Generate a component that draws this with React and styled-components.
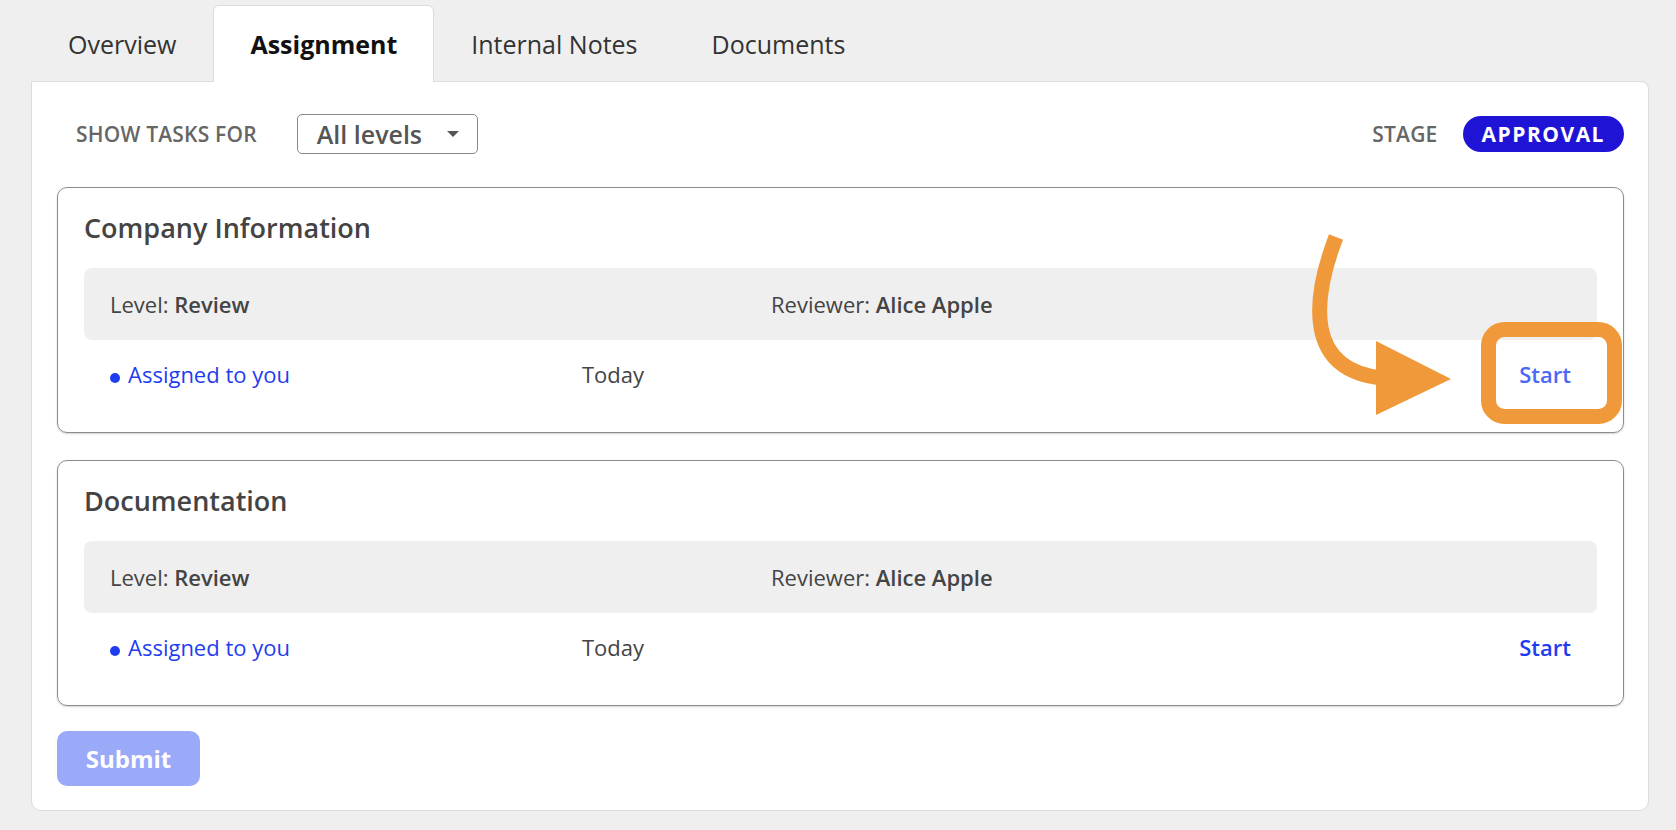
import React from "react";
import styled, { createGlobalStyle } from "styled-components";

const GlobalStyle = createGlobalStyle`
  html, body { margin: 0; padding: 0; }
  body {
    background: #efefef;
    font-family: "Open Sans", "Noto Sans", sans-serif;
    color: #444;
  }
  * { box-sizing: border-box; }
`;

const Page = styled.div`
  position: relative;
  width: 1676px;
  height: 830px;
  padding: 5px 27px 0 31px;
`;

const TabBar = styled.div`
  display: flex;
  position: relative;
  z-index: 1;
  margin-bottom: -1px;
`;

const Tab = styled.div`
  height: 77px;
  padding: 0 36px;
  display: flex;
  align-items: center;
  font-size: 25px;
  border: 1px solid ${(p) => (p.$active ? "#dcdcdc" : "transparent")};
  border-bottom: none;
  border-radius: 6px 6px 0 0;
  background: ${(p) => (p.$active ? "#fff" : "transparent")};
  color: ${(p) => (p.$active ? "#111" : "#333")};
  font-weight: ${(p) => (p.$active ? 700 : 400)};
`;

const Panel = styled.div`
  background: #fff;
  border: 1px solid #dcdcdc;
  border-radius: 0 8px 10px 10px;
  padding: 32px 24px 24px 25px;
`;

const FilterRow = styled.div`
  height: 40px;
  display: flex;
  align-items: center;
  justify-content: space-between;
  padding-left: 19px;
`;

const Group = styled.div`
  display: flex;
  align-items: center;
  gap: ${(p) => p.$gap}px;
`;

const Caption = styled.span`
  font-size: 21px;
  font-weight: 600;
  color: #666;
  text-transform: uppercase;
  letter-spacing: 0.2px;
`;

const Select = styled.div`
  width: 181px;
  height: 40px;
  border: 1px solid #888;
  border-radius: 5px;
  display: flex;
  align-items: center;
  justify-content: space-between;
  padding: 0 18px 0 19px;
  font-size: 25px;
  font-weight: 600;
  color: #555;
`;

const Caret = styled.span`
  width: 0;
  height: 0;
  border-left: 6px solid transparent;
  border-right: 6px solid transparent;
  border-top: 6px solid #555;
`;

const Pill = styled.span`
  height: 36px;
  padding: 0 19px 0 19px;
  border-radius: 18px;
  background: #1f14d6;
  color: #fff;
  font-size: 21px;
  font-weight: 700;
  letter-spacing: 1.5px;
  display: flex;
  align-items: center;
`;

const CardList = styled.div`
  display: flex;
  flex-direction: column;
  gap: 27px;
  margin-top: 33px;
`;

const Card = styled.section`
  height: 246px;
  border: 1px solid #8c8c8c;
  border-radius: 10px;
  box-shadow: 0 1px 2px rgba(0, 0, 0, 0.18);
  padding: 21px 26px 0 26px;
`;

const CardTitle = styled.h2`
  margin: 0 0 22px;
  font-size: 27px;
  line-height: 37px;
  font-weight: 600;
  color: #444;
`;

const InfoRow = styled.div`
  height: 72px;
  background: #efefef;
  border-radius: 8px;
  display: grid;
  grid-template-columns: 661px 1fr;
  align-items: center;
  padding: 0 26px;
  font-size: 22px;
  color: #444;
  b { font-weight: 600; }
`;

const TaskRow = styled.div`
  height: 68px;
  display: grid;
  grid-template-columns: 472px 1fr auto;
  align-items: center;
  padding: 0 26px;
  font-size: 22px;
  color: #444;
`;

const Assigned = styled.span`
  color: #1f3df0;
  display: flex;
  align-items: baseline;
  gap: 8px;
`;

const Dot = styled.span`
  width: 10px;
  height: 10px;
  border-radius: 50%;
  background: #1f3df0;
  display: inline-block;
`;

const StartLink = styled.span`
  font-weight: 600;
  color: ${(p) => (p.$highlight ? "#4a68f4" : "#1f3df0")};
`;

const SubmitButton = styled.button`
  margin-top: 25px;
  width: 143px;
  height: 55px;
  border: none;
  border-radius: 10px;
  background: #9aa9f8;
  color: #fff;
  font-family: inherit;
  font-size: 24px;
  font-weight: 700;
`;

const Overlay = styled.svg`
  position: absolute;
  left: 0;
  top: 0;
  pointer-events: none;
  z-index: 5;
`;

const tasks = [
  { title: "Company Information", highlight: true },
  { title: "Documentation", highlight: false },
];

export default function App() {
  return (
    <>
      <GlobalStyle />
      <Page>
        <TabBar>
          <Tab>Overview</Tab>
          <Tab $active>Assignment</Tab>
          <Tab>Internal Notes</Tab>
          <Tab>Documents</Tab>
        </TabBar>
        <Panel>
          <FilterRow>
            <Group $gap={40}>
              <Caption>Show tasks for</Caption>
              <Select>
                All levels
                <Caret />
              </Select>
            </Group>
            <Group $gap={25}>
              <Caption>Stage</Caption>
              <Pill>APPROVAL</Pill>
            </Group>
          </FilterRow>
          <CardList>
            {tasks.map((t) => (
              <Card key={t.title}>
                <CardTitle>{t.title}</CardTitle>
                <InfoRow>
                  <span>
                    Level: <b>Review</b>
                  </span>
                  <span>
                    Reviewer: <b>Alice Apple</b>
                  </span>
                </InfoRow>
                <TaskRow>
                  <Assigned>
                    <Dot />
                    Assigned to you
                  </Assigned>
                  <span>Today</span>
                  <StartLink $highlight={t.highlight}>Start</StartLink>
                </TaskRow>
              </Card>
            ))}
          </CardList>
          <SubmitButton>Submit</SubmitButton>
        </Panel>
        <Overlay width="1676" height="830" viewBox="0 0 1676 830">
          <path
            d="M1336 237 C1312 300, 1305 370, 1382 378"
            fill="none"
            stroke="#f0993a"
            strokeWidth="15"
          />
          <polygon points="1376,341 1376,415 1451,379" fill="#f0993a" />
          <rect
            x="1488.5"
            y="329.5"
            width="126"
            height="87"
            rx="16"
            fill="none"
            stroke="#f0993a"
            strokeWidth="15"
          />
        </Overlay>
      </Page>
    </>
  );
}
